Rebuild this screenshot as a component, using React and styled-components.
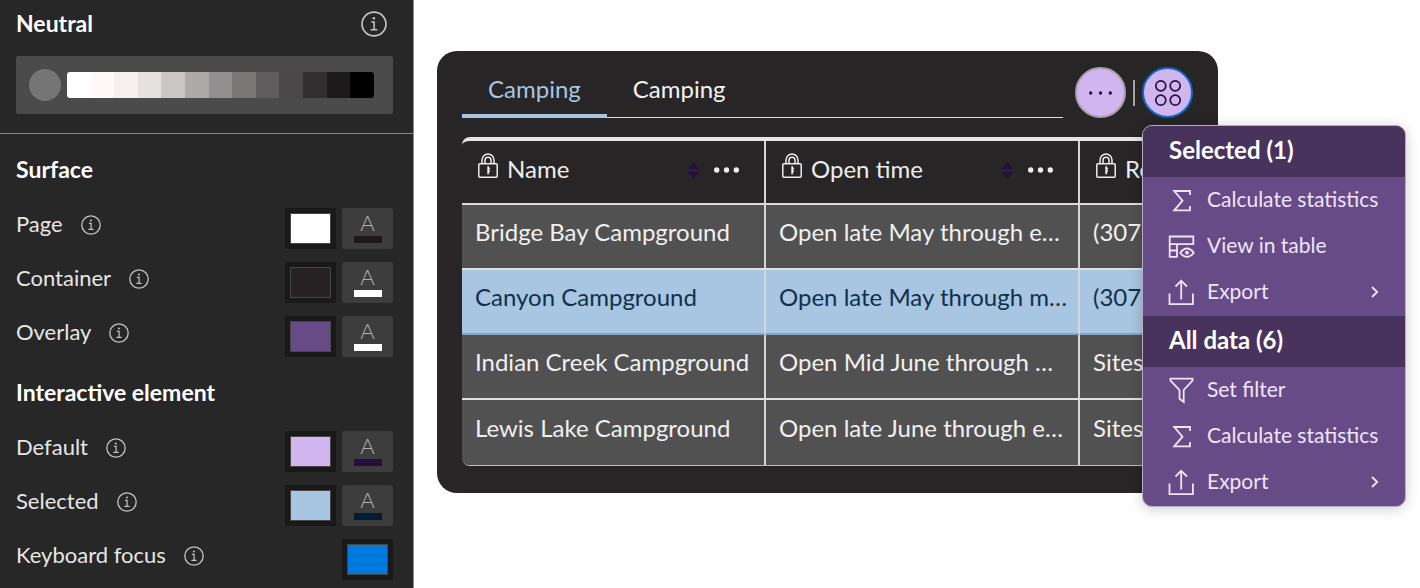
import React from "react";
import styled, { createGlobalStyle } from "styled-components";

const GlobalStyle = createGlobalStyle`
  *, *::before, *::after { box-sizing: border-box; }
  body {
    margin: 0;
    background: #fff;
    font-family: Lato, "Open Sans", sans-serif;
    font-size: 24px;
    line-height: 32px;
  }
  button {
    margin: 0;
    padding: 0;
    border: 0;
    background: none;
    color: inherit;
    font: inherit;
    cursor: pointer;
  }
  h2, h3, p { margin: 0; font: inherit; }
  svg { display: block; flex: none; }
`;

const Layout = styled.div`
  display: flex;
  align-items: stretch;
  height: 100vh;
  overflow: hidden;
`;

const Sidebar = styled.aside`
  flex: 0 0 414px;
  overflow: hidden;
  border-right: 1px solid #8c8c8c;
  background: #272727;
  color: #e6e6e6;
  font-size: 22px;
`;

const Section = styled.section`
  padding: 0 20px 0 16px;
`;

const NeutralSection = styled(Section)`
  padding-bottom: 19px;
  border-bottom: 1px solid #858585;
`;

const NeutralHeader = styled.header`
  display: flex;
  align-items: center;
  justify-content: space-between;
  height: 48px;
  padding-right: 6px;
`;

const SectionTitle = styled.h2`
  padding-bottom: 2px;
  color: #fff;
  font-size: 23px;
  font-weight: 700;
  line-height: 30px;
`;

const InfoButton = styled.button`
  display: flex;
  color: #c4c4c4;
`;

const Palette = styled.div`
  display: flex;
  align-items: center;
  gap: 6px;
  height: 58px;
  margin-top: 8px;
  padding: 0 19px 0 13px;
  border-radius: 2px;
  background: #4b4b4b;
`;

const BaseColor = styled.button`
  flex: none;
  width: 32px;
  height: 32px;
  border-radius: 50%;
  background: #757575;
`;

const Ramp = styled.div`
  display: flex;
  flex: 1;
  height: 26px;
  overflow: hidden;
  border-radius: 3px;
`;

const RampStep = styled.span`
  flex: 1;
  background: ${(p) => p.$color};
`;

const ColorGroup = styled(Section)`
  padding-top: 20px;
`;

const ColorList = styled.div`
  display: flex;
  flex-direction: column;
  gap: 13px;
  margin-top: 22px;
`;

const ColorRow = styled.div`
  display: flex;
  align-items: flex-start;
  gap: 6px;
  height: 41px;
`;

const ColorLabel = styled.div`
  display: flex;
  flex: 1;
  align-items: center;
  gap: 18px;
  height: 34px;
`;

const ColorName = styled.span`
  padding-bottom: 2px;
`;

const Swatch = styled.button`
  width: 51px;
  height: 41px;
  padding: 5px;
  background: #191919;
`;

const SwatchFill = styled.span`
  display: block;
  height: 100%;
  border: 1px solid #464646;
  background: ${(p) => p.$color};
`;

const TextColorButton = styled.button`
  display: flex;
  flex-direction: column;
  align-items: center;
  width: 51px;
  height: 41px;
  padding-top: 6px;
  border-radius: 3px;
  background: #3d3d3d;
  color: #b0b0b0;
  font-size: 22px;
  font-weight: 300;
  line-height: 18px;
`;

const TextColorBar = styled.span`
  width: 28px;
  height: 7px;
  margin-top: 4px;
  background: ${(p) => p.$color};
`;

const Main = styled.main`
  flex: 1;
  min-width: 0;
  padding: 51px 202px 24px 23px;
`;

const Card = styled.section`
  padding: 16px 25px 27px;
  border-radius: 20px;
  background: #272526;
  color: #ededed;
`;

const CardHeader = styled.header`
  display: flex;
  align-items: flex-start;
  gap: 12px;
`;

const Tabs = styled.div`
  display: flex;
  flex: 1;
  height: 51px;
  border-bottom: 1px solid #dcdcdc;
`;

const Tab = styled.button`
  height: 51px;
  padding: 0 26px 4px;
  border-bottom: 4px solid ${(p) => (p.$active ? "#a8c6e1" : "transparent")};
  color: ${(p) => (p.$active ? "#a8c6e1" : "#f2f2f2")};
`;

const Actions = styled.div`
  display: flex;
  align-items: center;
  gap: 7px;
`;

const ActionDivider = styled.span`
  width: 2px;
  height: 26px;
  background: #a6a6a6;
`;

const RoundButton = styled.button`
  display: flex;
  align-items: center;
  justify-content: center;
  width: 51px;
  height: 51px;
  border: 2px solid ${(p) => (p.$focused ? "#0d67c2" : "#a99fae")};
  border-radius: 50%;
  background: #d0b5ee;
  color: #24103f;
`;

const MenuAnchor = styled.div`
  position: relative;
`;

const Menu = styled.div`
  position: absolute;
  z-index: 2;
  top: 58px;
  left: 0;
  width: 264px;
  overflow: hidden;
  border: 1px solid #b9abc3;
  border-radius: 10px;
  background: #674b87;
  box-shadow: 0 2px 14px rgba(0, 0, 0, 0.2);
  color: #f1e4fa;
  font-size: 21px;
`;

const MenuTitle = styled.h3`
  height: 51px;
  padding: 8px 26px;
  background: #47335c;
  color: #fff;
  font-size: 24px;
  font-weight: 700;
`;

const MenuList = styled.div`
  padding-bottom: 1px;
`;

const MenuItem = styled.button`
  display: flex;
  align-items: center;
  gap: 12px;
  width: 100%;
  height: 46px;
  padding: 0 26px 0 25px;
  text-align: left;
  white-space: nowrap;
`;

const MenuLabel = styled.span`
  flex: 1;
  padding-bottom: 2px;
`;

const TableFrame = styled.div`
  margin-top: 19px;
  overflow: hidden;
  border-top: 4px solid #e8e4e6;
  border-bottom: 1px solid #bdbdbd;
  border-radius: 8px;
`;

const Table = styled.table`
  width: 100%;
  border-collapse: separate;
  border-spacing: 0;
  table-layout: fixed;
`;

const Column = styled.col`
  width: ${(p) => p.$width};
`;

const HeadCell = styled.th`
  height: 64px;
  padding: 0 25px 4px 16px;
  overflow: hidden;
  border-right: 2px solid #d6d6d6;
  border-bottom: 2px solid #dcdcdc;
  font-weight: 400;
  text-align: left;
  &:last-child { border-right: 0; padding-right: 0; }
`;

const HeadContent = styled.div`
  display: flex;
  align-items: center;
  gap: 9px;
  white-space: nowrap;
`;

const HeadTools = styled.div`
  display: flex;
  align-items: center;
  gap: 15px;
  margin-left: auto;
`;

const HeadLabel = styled.span`
  padding-bottom: 2px;
`;

const LockSlot = styled.span`
  padding-bottom: 8px;
`;

const Row = styled.tr`
  background: ${(p) => (p.$selected ? "#a8c6e1" : "#515151")};
  color: ${(p) => (p.$selected ? "#10304e" : "#f0f0f0")};
`;

const Cell = styled.td`
  height: 65px;
  padding: 0 8px 10px 13px;
  overflow: hidden;
  border-right: 2px solid #d6d6d6;
  border-bottom: 2px solid ${(p) => (p.$selected ? "#8aa3ba" : "#e0e0e0")};
  white-space: nowrap;
  &:last-child { border-right: 0; }
  tr:last-child > & { border-bottom: 0; }
`;

const InfoIcon = ({ size = 20 }) => (
  <svg width={size} height={size} viewBox="0 0 20 20" fill="none" stroke="currentColor" strokeWidth="1.3">
    <circle cx="10" cy="10" r="9.2" />
    <path d="M7.9 8.4h2.2v6M7.4 14.4h5.2" strokeWidth="1.2" />
    <circle cx="9.9" cy="5.6" r="1" fill="currentColor" stroke="none" />
  </svg>
);

const LockIcon = () => (
  <svg width="20" height="26" viewBox="0 0 20 26" fill="none" stroke="currentColor" strokeWidth="1.5">
    <rect x="0.8" y="10.8" width="18.4" height="13.4" rx="1" />
    <path d="M4 10.8V7a6 6 0 0 1 12 0v3.8M7 10.8V7.2a3 3 0 0 1 6 0v3.6" />
    <path d="M9.3 13.2h1.8v1.6h1v1.4h-1v1h1v1.6h-1v2.4H9.3z" fill="currentColor" stroke="none" />
  </svg>
);

const SortIcon = () => (
  <svg width="11" height="17" viewBox="0 0 11 17" fill="#24103f">
    <path d="M5.5 0 11 7H0zM5.5 17 0 10h11z" />
  </svg>
);

const MoreIcon = ({ width = 25, radius = 2.7 }) => (
  <svg width={width} height="8" viewBox={`0 0 ${width} 8`} fill="currentColor">
    <circle cx={radius} cy="4" r={radius} />
    <circle cx={width / 2} cy="4" r={radius} />
    <circle cx={width - radius} cy="4" r={radius} />
  </svg>
);

const AppsIcon = () => (
  <svg width="28" height="28" viewBox="0 0 28 28" fill="none" stroke="currentColor" strokeWidth="1.7">
    <circle cx="6.8" cy="6.8" r="5" />
    <circle cx="21.2" cy="6.8" r="5" />
    <circle cx="6.8" cy="21.2" r="5" />
    <circle cx="21.2" cy="21.2" r="5" />
  </svg>
);

const menuPaths = {
  sigma: <path d="M22 8V4H6.2l8.3 9.7-8.3 9.6H22v-4.2" />,
  table: (
    <>
      <path d="M9.500 23.800H1.700V3.500h23.600v8.500M1.700 11.200h23.600M9 11.200v12.600M1.700 17.500H9" />
      <path d="M12.300 19.700q3-4.200 6.700-4.200t6.700 4.200q-3 4.200-6.700 4.200t-6.700-4.200z" />
      <circle cx="19" cy="19.700" r="1.900" fill="currentColor" stroke="none" />
    </>
  ),
  upload: <path d="M1.500 14.500v10.700h23.400V14.500M13.200 20.500V2M7.500 7.500 13.200 1.700l5.700 5.800" />,
  filter: <path d="M2.500 1.700h22v2L15.700 13v12l-4.200-3.200V13L2.500 3.700z" />,
};

const MenuIcon = ({ name }) => (
  <svg width="27" height="27" viewBox="0 0 27 27" fill="none" stroke="currentColor" strokeWidth="1.8">
    {menuPaths[name]}
  </svg>
);

const Chevron = () => (
  <svg width="8" height="12" viewBox="0 0 8 12" fill="none" stroke="currentColor" strokeWidth="1.8">
    <path d="M1 1l5.200 5L1 11" />
  </svg>
);

const ramp = [
  "#ffffff", "#fff8f8", "#f5efef", "#e5e1e0", "#cac6c5", "#acaaa8", "#929091",
  "#7a7876", "#5f5d5e", "#4a4748", "#322f30", "#1d1a1b", "#000000",
];

const groups = [
  {
    title: "Surface",
    rows: [
      { label: "Page", color: "#ffffff", text: "#1d191a" },
      { label: "Container", color: "#272324", text: "#ffffff" },
      { label: "Overlay", color: "#674b87", text: "#ffffff" },
    ],
  },
  {
    title: "Interactive element",
    rows: [
      { label: "Default", color: "#d0b5ee", text: "#24103f" },
      { label: "Selected", color: "#a8c6e1", text: "#001d33" },
      { label: "Keyboard focus", color: "#0079dc" },
    ],
  },
];

const columns = [
  { name: "Name", width: "304px", tools: true },
  { name: "Open time", width: "314px", tools: true },
  { name: "Re", width: "auto" },
];

const campgrounds = [
  ["Bridge Bay Campground", "Open late May through e…", "(307)"],
  ["Canyon Campground", "Open late May through m…", "(307)"],
  ["Indian Creek Campground", "Open Mid June through …", "Sites"],
  ["Lewis Lake Campground", "Open late June through e…", "Sites"],
];

const menuGroups = [
  {
    title: "Selected (1)",
    items: [
      { icon: "sigma", label: "Calculate statistics" },
      { icon: "table", label: "View in table" },
      { icon: "upload", label: "Export", submenu: true },
    ],
  },
  {
    title: "All data (6)",
    items: [
      { icon: "filter", label: "Set filter" },
      { icon: "sigma", label: "Calculate statistics" },
      { icon: "upload", label: "Export", submenu: true },
    ],
  },
];

function ThemeSidebar() {
  return (
    <Sidebar>
      <NeutralSection>
        <NeutralHeader>
          <SectionTitle>Neutral</SectionTitle>
          <InfoButton aria-label="About neutral colors"><InfoIcon size={26} /></InfoButton>
        </NeutralHeader>
        <Palette>
          <BaseColor aria-label="Neutral base color" />
          <Ramp>{ramp.map((c) => <RampStep key={c} $color={c} />)}</Ramp>
        </Palette>
      </NeutralSection>
      {groups.map((group) => (
        <ColorGroup key={group.title}>
          <SectionTitle>{group.title}</SectionTitle>
          <ColorList>
            {group.rows.map((row) => (
              <ColorRow key={row.label}>
                <ColorLabel>
                  <ColorName>{row.label}</ColorName>
                  <InfoButton aria-label={`About ${row.label}`}><InfoIcon /></InfoButton>
                </ColorLabel>
                <Swatch aria-label={`${row.label} color`}><SwatchFill $color={row.color} /></Swatch>
                {row.text && (
                  <TextColorButton aria-label={`${row.label} text color`}>
                    A
                    <TextColorBar $color={row.text} />
                  </TextColorButton>
                )}
              </ColorRow>
            ))}
          </ColorList>
        </ColorGroup>
      ))}
    </Sidebar>
  );
}

function ActionMenu() {
  return (
    <Menu role="menu">
      {menuGroups.map((group) => (
        <React.Fragment key={group.title}>
          <MenuTitle>{group.title}</MenuTitle>
          <MenuList>
            {group.items.map((item) => (
              <MenuItem key={item.label} role="menuitem">
                <MenuIcon name={item.icon} />
                <MenuLabel>{item.label}</MenuLabel>
                {item.submenu && <Chevron />}
              </MenuItem>
            ))}
          </MenuList>
        </React.Fragment>
      ))}
    </Menu>
  );
}

export default function App() {
  return (
    <Layout>
      <GlobalStyle />
      <ThemeSidebar />
      <Main>
        <Card>
          <CardHeader>
            <Tabs role="tablist">
              <Tab role="tab" aria-selected="true" $active>Camping</Tab>
              <Tab role="tab" aria-selected="false">Camping</Tab>
            </Tabs>
            <Actions>
              <RoundButton aria-label="More"><MoreIcon width={23} radius={1.7} /></RoundButton>
              <ActionDivider />
              <MenuAnchor>
                <RoundButton $focused aria-label="Actions" aria-expanded="true"><AppsIcon /></RoundButton>
                <ActionMenu />
              </MenuAnchor>
            </Actions>
          </CardHeader>
          <TableFrame>
            <Table>
              <colgroup>
                {columns.map((c) => <Column key={c.name} $width={c.width} />)}
              </colgroup>
              <thead>
                <tr>
                  {columns.map((c) => (
                    <HeadCell key={c.name} scope="col">
                      <HeadContent>
                        <LockSlot><LockIcon /></LockSlot>
                        <HeadLabel>{c.name}</HeadLabel>
                        {c.tools && (
                          <HeadTools>
                            <button aria-label={`Sort by ${c.name}`}><SortIcon /></button>
                            <button aria-label={`${c.name} options`}><MoreIcon /></button>
                          </HeadTools>
                        )}
                      </HeadContent>
                    </HeadCell>
                  ))}
                </tr>
              </thead>
              <tbody>
                {campgrounds.map((cells, i) => (
                  <Row key={cells[0]} $selected={i === 1}>
                    {cells.map((text, j) => <Cell key={j} $selected={i === 1}>{text}</Cell>)}
                  </Row>
                ))}
              </tbody>
            </Table>
          </TableFrame>
        </Card>
      </Main>
    </Layout>
  );
}
